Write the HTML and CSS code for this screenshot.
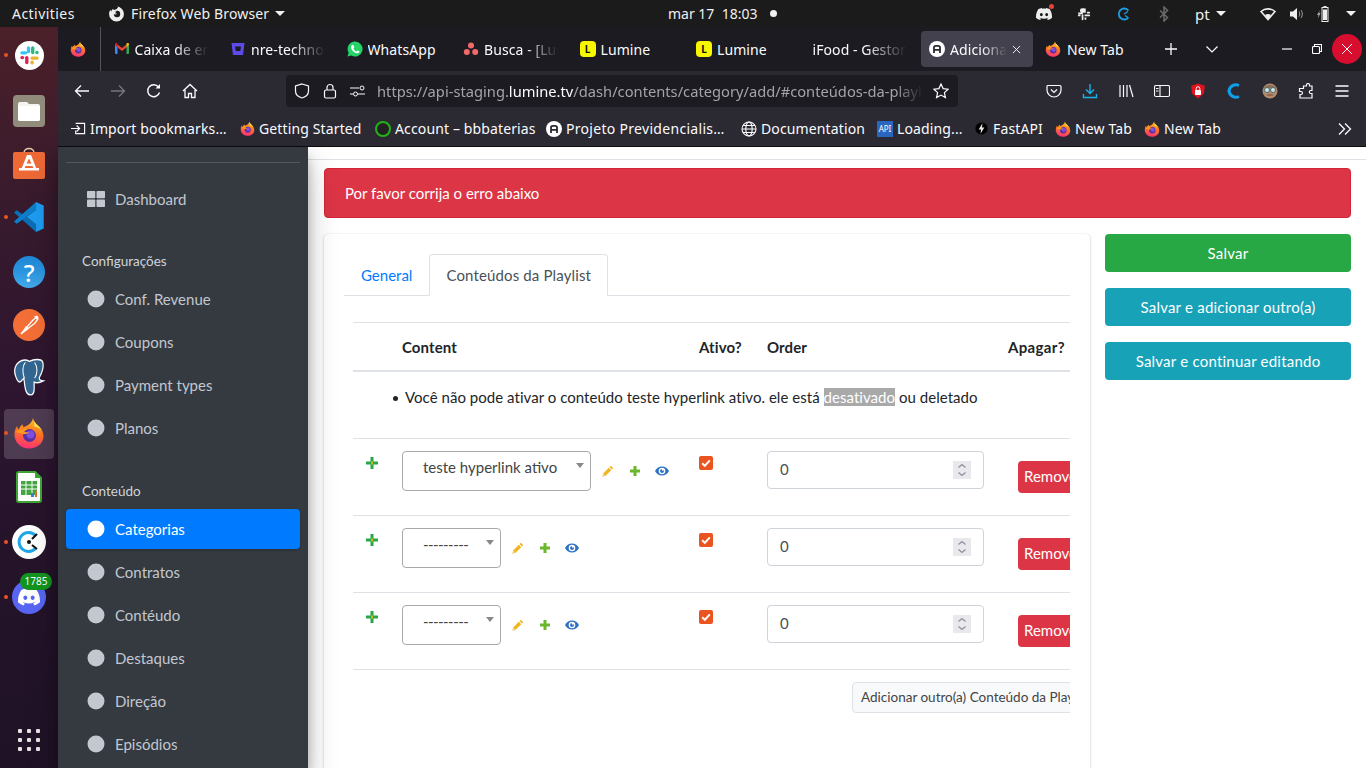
FILE: index.html
```html
<!DOCTYPE html>
<html lang="pt">
<head>
<meta charset="utf-8">
<title>Adicionar categoria</title>
<link rel="stylesheet" href="styles.css">
</head>
<body>
<svg class="defs" aria-hidden="true">
  <defs>
    <linearGradient id="ffg" x1="0.6" y1="0" x2="0.4" y2="1"><stop offset="0" stop-color="#ffc02e"/><stop offset=".45" stop-color="#ff7a1f"/><stop offset="1" stop-color="#ff2f78"/></linearGradient>
    <symbol id="firefox" viewBox="0 0 32 32">
      <path fill="url(#ffg)" d="M20 1c.6 3.6 2.8 5.4 5 7.4 3.600 3.200 5.500 7 5.500 10.600C30.500 26.500 24 31.500 16 31.500S1.500 25.500 1.500 17.500c0-3 .9-6 2.600-8.500.1 1.500.7 2.800 1.700 3.600.6-2.400 2-4.200 4.200-5.100-.3 1.200-.2 2 .4 2.600 3.600-1 8.600-3.600 9.600-9.100z"/>
      <path fill="#ffe34d" d="M20 1c.6 3.600 2.800 5.400 5 7.400 2.300 2.100 3.900 4.400 4.800 6.800-1.700-3.400-5-5.200-8.800-5.600C22 7 21 4 20 1z"/>
      <circle cx="16.500" cy="18.500" r="6.500" fill="#5a30a8"/>
      <circle cx="17.500" cy="17.500" r="4" fill="#7f4fe0"/>
      <path fill="#ff9a1f" d="M3 15c3-3 8-4.500 12-3-2 .5-3.500 1.500-4 2.800 1.200.6 3 .5 5 .2-1.500 2-5 2.600-7.500 1.500C6 15.800 4.500 15.800 3 15z"/>
    </symbol>
    <symbol id="roundlogo" viewBox="0 0 16 16">
      <circle cx="8" cy="8" r="8" fill="#fff"/>
      <path fill="none" stroke="#2b2a33" stroke-width="1.800" d="M5 12V6.500C5 5.400 5.800 4.800 7 4.800h2c1.200 0 2 .6 2 1.700V12M5 8.800h6"/>
    </symbol>
    <symbol id="discordmark" viewBox="0 0 24 24">
      <path d="M20.317 4.3698a19.7913 19.7913 0 00-4.8851-1.5152.0741.0741 0 00-.0785.0371c-.211.3753-.4447.8648-.6083 1.2495-1.8447-.2762-3.68-.2762-5.4868 0-.1636-.3933-.4058-.8742-.6177-1.2495a.077.077 0 00-.0785-.037 19.7363 19.7363 0 00-4.8852 1.515.0699.0699 0 00-.0321.0277C.5334 9.0458-.319 13.5799.0992 18.0578a.0824.0824 0 00.0312.0561c2.0528 1.5076 4.0413 2.4228 5.9929 3.0294a.0777.0777 0 00.0842-.0276c.4616-.6304.8731-1.2952 1.226-1.9942a.076.076 0 00-.0416-.1057c-.6528-.2476-1.2743-.5495-1.8722-.8923a.077.077 0 01-.0076-.1277c.1258-.0943.2517-.1923.3718-.2914a.0743.0743 0 01.0776-.0105c3.9278 1.7933 8.18 1.7933 12.0614 0a.0739.0739 0 01.0785.0095c.1202.099.246.1981.3728.2924a.077.077 0 01-.0066.1276 12.2986 12.2986 0 01-1.873.8914.0766.0766 0 00-.0407.1067c.3604.698.7719 1.3628 1.225 1.9932a.076.076 0 00.0842.0286c1.961-.6067 3.9495-1.5219 6.0023-3.0294a.077.077 0 00.0313-.0552c.5004-5.177-.8382-9.6739-3.5485-13.6604a.061.061 0 00-.0312-.0286zM8.02 15.3312c-1.1825 0-2.1569-1.0857-2.1569-2.419 0-1.3332.9555-2.4189 2.157-2.4189 1.2108 0 2.1757 1.0952 2.1568 2.419 0 1.3332-.9555 2.4189-2.1569 2.4189zm7.9748 0c-1.1825 0-2.1569-1.0857-2.1569-2.419 0-1.3332.9554-2.4189 2.1569-2.4189 1.2108 0 2.1757 1.0952 2.1568 2.419 0 1.3332-.946 2.4189-2.1568 2.4189Z"/>
    </symbol>
    <symbol id="slackmark" viewBox="0 0 24 24">
      <rect x="9" y="1.500" width="3.800" height="8" rx="1.900" fill="#36c5f0"/>
      <rect x="1.500" y="7" width="8" height="3.800" rx="1.900" fill="#36c5f0"/>
      <rect x="13.800" y="1.500" width="3.800" height="9" rx="1.900" fill="#2eb67d"/>
      <rect x="18.500" y="6.500" width="4" height="4" rx="1.900" fill="#2eb67d"/>
      <rect x="13" y="13" width="9.500" height="3.800" rx="1.900" fill="#ecb22e"/>
      <rect x="13" y="17.800" width="4" height="4.500" rx="1.900" fill="#ecb22e"/>
      <rect x="7" y="12.500" width="3.800" height="9.500" rx="1.900" fill="#e01e5a"/>
      <rect x="1.500" y="12.500" width="4.500" height="3.800" rx="1.900" fill="#e01e5a"/>
    </symbol>
    <symbol id="pencil" viewBox="0 0 12 12"><path fill="#f0b41c" d="M8.800.8l2.400 2.400-1.300 1.300-2.400-2.400zM6.800 2.800l2.400 2.400-5.600 5.600-3.200.9.800-3.300zM1.700 9l-.4 1.700 1.700-.4z"/></symbol>
    <symbol id="plusg" viewBox="0 0 12 12"><path fill="#6ab62d" d="M4.500 1h3v3.500H11v3H7.500V11h-3V7.500H1v-3h3.500z"/></symbol>
    <symbol id="eye" viewBox="0 0 14 10"><path fill="#2f72c4" d="M7 .5C3.800.5 1.200 2.400 0 5c1.200 2.600 3.800 4.500 7 4.500s5.800-1.900 7-4.500C12.800 2.400 10.200.5 7 .5zm0 7.800A3.300 3.300 0 1 1 7 1.700a3.300 3.300 0 0 1 0 6.600zM7 3a2 2 0 1 0 2 2c0-.4-.1-.7-.3-1A1 1 0 1 1 7 3z"/></symbol>
    <symbol id="grow" viewBox="0 0 14 14"><rect x="5.500" y="1" width="3" height="12" fill="#28a745"/><rect x="1" y="5.500" width="12" height="3" fill="#28a745"/><rect x="6" y="5.500" width="2" height="3" fill="#d7b32a"/></symbol>
    <symbol id="chk" viewBox="0 0 14 14"><rect width="14" height="14" rx="2" fill="#e95420"/><path d="M3.200 7.300l2.600 2.500 5-5.500" fill="none" stroke="#fff" stroke-width="2"/></symbol>
    <symbol id="spin" viewBox="0 0 18 18"><rect width="18" height="18" fill="#e9e9ed"/><path d="M5.500 6.500L9 3.500l3.500 3M5.500 11.500L9 14.500l3.500-3" fill="none" stroke="#8f8f9d" stroke-width="1.300"/></symbol>
    <symbol id="dot" viewBox="0 0 18 18"><circle cx="9" cy="9" r="8.500"/></symbol>
  </defs>
</svg>

<header class="topbar">
  <span class="activities">Activities</span>
  <span class="appmenu">
    <svg class="appicon" viewBox="0 0 16 16"><path fill="#eee" d="M8 1.500a7 7 0 1 1-7 7c0-1.500.5-3 1.300-4 .1.600.4 1.100.8 1.500.3-1.100 1-2 2-2.400-.1.500-.1.900.2 1.200C7 4.400 9.500 3.500 9.800 1.200 9.300 1.500 8.600 1.500 8 1.500z"/><circle cx="8.500" cy="8.500" r="3" fill="#1b1b1b"/><path fill="#eee" d="M3 6.800c1.500-1 3.400-1.300 5-.6l-1.400 1.600c.8.300 1.400.2 2-.1-.4 1-1.800 1.500-3 1.100C4.700 8.400 4 7.500 3 6.800z"/></svg>
    Firefox Web Browser<i class="caret"></i>
  </span>
  <span class="clock">mar 17&nbsp;&nbsp;18:03<i class="recdot"></i></span>
  <span class="tray">
    <span class="tslot"><svg class="t16" viewBox="0 0 24 24" fill="#eee"><use href="#discordmark"/></svg><i class="notif"></i></span>
    <span class="tslot"><svg class="t14 mono" viewBox="0 0 24 24"><path fill="#eee" d="M9 2h3v8H9a1.500 1.500 0 0 1 0-8zM2 9.500h8v3H3.500A1.500 1.500 0 0 1 2 11zM13.500 2a1.500 1.500 0 0 1 1.500 1.500V10h-3V3.500A1.500 1.500 0 0 1 13.500 2zM17 8h4a1.500 1.500 0 0 1 0 3h-4zM13 13h8a1.500 1.500 0 0 1 0 3h-8zM13 18h3v2.500a1.500 1.500 0 0 1-3 0zM9 13h2v8a1.500 1.500 0 0 1-3 0v-6.500A1.500 1.500 0 0 1 9 13zM3 13h3v3H3a1.500 1.500 0 0 1 0-3z"/></svg></span>
    <span class="tslot"><svg class="t14" viewBox="0 0 14 14" fill="none"><path d="M11.500 3.500A5.500 5.500 0 1 0 11.500 10.500" stroke="#1f9be0" stroke-width="1.800"/><path d="M7 7l4-2.500M8 8.500l3 2" stroke="#1f9be0" stroke-width="1.400"/></svg></span>
    <span class="tslot"><svg class="t16" viewBox="0 0 16 16" fill="none"><path d="M4 4.500l7.500 7-3.500 3.500V1l3.500 3.500-7.500 7" stroke="#6b6b6b" stroke-width="1.500"/></svg></span>
    <span class="tlang">pt<i class="caret"></i></span>
    <span class="tslot wifi"><svg class="t16" viewBox="0 0 16 14"><path fill="none" stroke="#eee" stroke-width="1.600" d="M1 4.500C5 1 11 1 15 4.500L8 12.500z"/><path fill="#eee" d="M5 8c2-1.300 4-1.300 6 0L8 12.500z"/></svg></span>
    <span class="tslot vol"><svg class="t16" viewBox="0 0 16 16"><path fill="#eee" d="M1 5.500h3L8 2v12l-4-3.500H1z"/><path fill="none" stroke="#999" stroke-width="1" d="M10 5.500c1 1.500 1 3.500 0 5M12 4c1.800 2.500 1.800 5.500 0 8"/></svg></span>
    <span class="tslot batt"><svg class="t16" viewBox="0 0 16 16"><path fill="#eee" d="M6.500 0h3v1h2v15h-7V1h2z"/><path fill="#1b1b1b" d="M5.500 2h5v13h-5z"/><path fill="#eee" d="M6 3.500h4V14H6z"/><path fill="#aaa" d="M3 4L0 9h1.500L1 12.500 3.500 7H2z"/></svg></span>
    <i class="caret lastcaret"></i>
  </span>
</header>

<div class="desktop">
  <nav class="dock">
    <div class="dockitem"><i class="running"></i>
      <span class="slack"><svg class="s21"><use href="#slackmark"/></svg></span>
    </div>
    <div class="dockitem">
      <svg class="d32" viewBox="0 0 32 32"><rect width="32" height="32" rx="4" fill="#908b7b"/><path fill="#f6f4f0" d="M5 9a2 2 0 0 1 2-2h7l2 2h9a2 2 0 0 1 2 2v13a2 2 0 0 1-2 2H7a2 2 0 0 1-2-2z"/><path fill="#fff" d="M5 11h22v13a2 2 0 0 1-2 2H7a2 2 0 0 1-2-2z"/></svg>
    </div>
    <div class="dockitem">
      <svg class="d32" viewBox="0 0 32 32"><path fill="none" stroke="#e9c9a6" stroke-width="1.500" d="M11 6c0-6 10-6 10 0"/><rect y="5" width="32" height="27" rx="2" fill="#ed6a36"/><path fill="#fff" d="M14 8h4l6 15h-3l-1.400-4h-7.200L11 23H8zm2 3.500L13.500 16.500h5z"/><rect x="6" y="21" width="20" height="2.500" fill="#fff"/></svg>
    </div>
    <div class="dockitem"><i class="running"></i>
      <svg class="d32" viewBox="0 0 100 100"><polygon fill="#0a6fb5" points="3,36 12,29 72,73 72,97"/><polygon fill="#0b7fcb" points="3,64 12,71 72,27 72,3"/><path fill="#1d9bf0" d="M72 3l24 11v72L72 97V73L42 50 72 27z" /></svg>
    </div>
    <div class="dockitem">
      <span class="helpicon">?</span>
    </div>
    <div class="dockitem">
      <svg class="d32" viewBox="0 0 32 32"><circle cx="16" cy="16" r="16" fill="#f46f37"/><path fill="none" stroke="#fff" stroke-width="1.300" d="M8 25L20 11l4-3 1 2-3 4z"/><path fill="#fff" d="M8 25l5-8 3 2.500zM21 7.500l3-1 1.500 2-2 2z"/></svg>
    </div>
    <div class="dockitem">
      <svg class="pg" viewBox="0 0 32 34" preserveAspectRatio="none"><path fill="#336791" stroke="#fff" stroke-width="1.200" d="M16 3c-3-1.500-7-1.500-10 .5C2 6 .6 11 2.500 16c1 3 2.500 5.500 4 5.500s2.500-2 4-3.500c.5 3 .8 7 1.500 9.500.7 3 2.500 5.500 5 5.500s3.500-2 3.500-5.500v-6c2 1 5 1 9-1-2-.2-4.500-.8-4-3 3-5 5-10 3-14.500C27 .5 20 1 16 3z"/><path fill="none" stroke="#fff" stroke-width="1" d="M12 4c-3 3-3 9-1 14M21 4c3 4 3 10 0 14"/></svg>
    </div>
    <div class="dockitem active"><i class="running"></i>
      <svg class="d32"><use href="#firefox"/></svg>
    </div>
    <div class="dockitem">
      <svg class="d32 calc" viewBox="0 0 26 32"><path fill="#fff" stroke="#3fa535" stroke-width="2" d="M3 1h16l6 6v22a2 2 0 0 1-2 2H3a2 2 0 0 1-2-2V3a2 2 0 0 1 2-2z"/><path fill="#3fa535" d="M19 0l7 7h-7z"/><path fill="#43a640" d="M5 10h16v14H5z"/><path stroke="#fff" stroke-width="1" d="M5 14h16M5 18h16M10 10v14M16 10v14"/><path fill="#e06d2f" d="M19 20h2v6h-2z"/><path fill="#3a81c9" d="M15 22h3v4h-3z"/></svg>
    </div>
    <div class="dockitem"><i class="running"></i>
      <svg class="d34" viewBox="0 0 34 34"><circle cx="17" cy="17" r="17" fill="#fff"/><path fill="none" stroke="#1ea7e8" stroke-width="3" d="M23.500 10.500a9.500 9.500 0 1 0 0 13"/><circle cx="17" cy="17" r="2" fill="#111"/><path stroke="#111" stroke-width="2" d="M20 14l5-5M20 20l5 4"/></svg>
    </div>
    <div class="dockitem"><i class="running"></i>
      <span class="discord"><svg class="s22" fill="#fff"><use href="#discordmark"/></svg><b class="badge">1785</b></span>
    </div>
    <div class="dockitem apps">
      <svg class="d22" viewBox="0 0 22 22" fill="#e6e3e6"><rect x="0" y="0" width="4" height="4" rx="1"/><rect x="9" y="0" width="4" height="4" rx="1"/><rect x="18" y="0" width="4" height="4" rx="1"/><rect x="0" y="9" width="4" height="4" rx="1"/><rect x="9" y="9" width="4" height="4" rx="1"/><rect x="18" y="9" width="4" height="4" rx="1"/><rect x="0" y="18" width="4" height="4" rx="1"/><rect x="9" y="18" width="4" height="4" rx="1"/><rect x="18" y="18" width="4" height="4" rx="1"/></svg>
    </div>
  </nav>

  <div class="browser">
    <div class="tabbar">
      <span class="ffbtn"><svg class="i16"><use href="#firefox"/></svg></span>
      <span class="tab"><svg class="i16" viewBox="0 0 16 16"><path fill="#4285f4" d="M1 3.500h2.500V13H2a1 1 0 0 1-1-1z"/><path fill="#34a853" d="M12.500 3.500H15V12a1 1 0 0 1-1 1h-1.500z"/><path fill="#ea4335" d="M3.500 3.500L8 7l4.500-3.500V6.500L8 10 3.500 6.500z"/><path fill="#c5221f" d="M1 3.500C1 2 2.500 1.800 3.500 2.500L3.500 6.500z"/><path fill="#fbbc04" d="M15 3.500C15 2 13.500 1.800 12.500 2.500V6.500z"/></svg><span class="tlabel fade">Caixa de entrada</span></span>
      <span class="tab"><svg class="i16" viewBox="0 0 16 16"><path fill="#5b4be8" d="M1.500 2h13L13 14H3z"/><path fill="#1c1b22" d="M5 5.500h6l-.7 4.500H5.700z"/></svg><span class="tlabel fade">nre-technology</span></span>
      <span class="tab"><svg class="i16" viewBox="0 0 16 16"><path fill="#25d366" d="M8 .5a7.500 7.500 0 0 0-6.400 11.300L.5 15.500l3.800-1A7.500 7.500 0 1 0 8 .5z"/><path fill="#fff" d="M5.500 3.800c-.4 0-1.500 1-1.500 2.500 0 2.500 3.500 6 6.300 6 1.500 0 2.300-1 2.300-1.700 0-.4-1.900-1.300-2.200-1.200-.4.100-.7 1-1 1-.8 0-2.700-1.800-2.900-2.700 0-.3.800-.7.800-1.100 0-.3-.6-2.800-1.800-2.800z"/></svg><span class="tlabel">WhatsApp</span></span>
      <span class="tab"><svg class="i16" viewBox="0 0 16 16" fill="#f06a6a"><circle cx="8" cy="4.500" r="3"/><circle cx="3.800" cy="11" r="3"/><circle cx="12.200" cy="11" r="3"/></svg><span class="tlabel fade">Busca - [Lumine]</span></span>
      <span class="tab"><span class="lumine">L</span><span class="tlabel">Lumine</span></span>
      <span class="tab"><span class="lumine">L</span><span class="tlabel">Lumine</span></span>
      <span class="tab"><span class="tlabel fade">iFood - Gestor</span></span>
      <span class="tab current"><svg class="i16"><use href="#roundlogo"/></svg><span class="tlabel fade">Adicionar</span><svg class="tabx" viewBox="0 0 10 10"><path d="M1 1l8 8M9 1l-8 8" stroke="#fbfbfe" stroke-width="1"/></svg></span>
      <span class="tab newtab"><svg class="i16"><use href="#firefox"/></svg><span class="tlabel">New Tab</span></span>
      <svg class="tplus" viewBox="0 0 12 12"><path d="M6 0v12M0 6h12" stroke="#fbfbfe" stroke-width="1.300"/></svg>
      <svg class="tchev" viewBox="0 0 12 7"><path d="M.5.500L6 6l5.500-5.500" fill="none" stroke="#fbfbfe" stroke-width="1.200"/></svg>
      <span class="wctl"><svg class="wico" viewBox="0 0 10 10"><path d="M0 5h10" stroke="#fff" stroke-width="1.200"/></svg></span>
      <span class="wctl"><svg class="wico" viewBox="0 0 10 10" fill="none" stroke="#fff" stroke-width="1.100"><rect x=".5" y="2.500" width="7" height="7" rx="1"/><path d="M2.500 2.500V.5h7v7h-2"/></svg></span>
      <span class="wclose"><svg class="wico" viewBox="0 0 10 10"><path d="M0 0l10 10M10 0L0 10" stroke="#fff" stroke-width="1"/></svg></span>
    </div>

    <div class="navbar">
      <span class="nslot"><svg class="i16" viewBox="0 0 16 16"><path d="M15 8H1.500M7 2.500L1.500 8 7 13.500" fill="none" stroke="#fbfbfe" stroke-width="1.300"/></svg></span>
      <span class="nslot"><svg class="i16" viewBox="0 0 16 16"><path d="M1 8h13.500M9 2.500L14.500 8 9 13.500" fill="none" stroke="#77767d" stroke-width="1.300"/></svg></span>
      <span class="nslot"><svg class="i16" viewBox="0 0 16 16" fill="none"><path d="M13.500 9.500A6 6 0 1 1 12.500 4" stroke="#fbfbfe" stroke-width="1.400"/><path d="M14 1v4.500H9.500z" fill="#fbfbfe"/></svg></span>
      <span class="nslot"><svg class="i16" viewBox="0 0 16 16" fill="none"><path d="M1 8l7-6.500L15 8M3 7v7.500h3.500V10.500h3v4H13V7" stroke="#fbfbfe" stroke-width="1.300"/></svg></span>
      <div class="urlbar">
        <svg class="uico shield" viewBox="0 0 16 16"><path d="M8 1l6.500 2v5c0 3.500-3 6-6.500 7-3.500-1-6.500-3.500-6.500-7V3z" fill="none" stroke="#fbfbfe" stroke-width="1.200"/></svg>
        <svg class="uico lock" viewBox="0 0 16 16"><rect x="2.500" y="7" width="11" height="8" rx="1.500" fill="none" stroke="#fbfbfe" stroke-width="1.200"/><path d="M5 7V4.500a3 3 0 0 1 6 0V7" fill="none" stroke="#fbfbfe" stroke-width="1.200"/></svg>
        <svg class="uico perm" viewBox="0 0 16 12"><path d="M0 3h9M0 9h3M8 9h7" stroke="#fbfbfe" stroke-width="1.100"/><circle cx="12" cy="3" r="2" fill="none" stroke="#fbfbfe"/><circle cx="5.500" cy="9" r="2" fill="none" stroke="#fbfbfe"/></svg>
        <span class="url">https://api-staging.<b>lumine.tv</b>/dash/contents/category/add/#conteúdos-da-playlist</span>
        <svg class="uico star" viewBox="0 0 16 16"><path d="M8 1l2.100 4.600 5 .6-3.700 3.400 1 5L8 12.100l-4.400 2.500 1-5L.9 6.200l5-.6z" fill="none" stroke="#fbfbfe" stroke-width="1.200"/></svg>
      </div>
      <div class="navright">
        <span class="nslot"><svg class="i16" viewBox="0 0 16 16" fill="none" stroke="#fbfbfe" stroke-width="1.200"><path d="M2 2.500h12a1 1 0 0 1 1 1V7a7 7 0 0 1-14 0V3.500a1 1 0 0 1 1-1z"/><path d="M5 6.500L8 9.500l3-3"/></svg></span>
        <span class="nslot"><svg class="i16" viewBox="0 0 16 16" fill="none" stroke="#17b3e8" stroke-width="1.400"><path d="M8 1v9M4 6.500L8 10.500l4-4M1.500 11v3.500h13V11"/></svg></span>
        <span class="nslot"><svg class="i16" viewBox="0 0 16 16" stroke="#fbfbfe" stroke-width="1.200" fill="none"><path d="M2 2v12M5.500 2v12M9 2v12M11.500 2l3.500 12"/></svg></span>
        <span class="nslot"><svg class="i16" viewBox="0 0 16 16" stroke="#fbfbfe" stroke-width="1.100" fill="none"><rect x=".5" y="2.500" width="15" height="11" rx="1.500"/><path d="M6 2.500v11M2 5.500h2.500M2 8h2.500"/></svg></span>
        <span class="nslot"><svg class="i16" viewBox="0 0 16 16"><path fill="#e2121d" d="M8 .5l6.800 2.300-.8 7.700L8 15.500 2 10.500l-.8-7.700z"/><rect x="5" y="7" width="6" height="5" rx=".8" fill="#fff"/><path d="M6.200 7V5.500a1.800 1.800 0 0 1 3.600 0V7" fill="none" stroke="#fff"/></svg></span>
        <span class="nslot"><svg class="i16" viewBox="0 0 16 16" fill="none"><path d="M13 2.500A7 7 0 0 0 3 8a7 7 0 0 0 10 5.500" stroke="#0fa0ea" stroke-width="3"/></svg></span>
        <span class="nslot"><svg class="i16" viewBox="0 0 16 16"><circle cx="8" cy="8" r="7.500" fill="#b28a6c"/><path d="M2 5c2-4 10-4 12 0z" fill="#8b6b54"/><circle cx="5" cy="7" r="2.500" fill="#cfe6e8" stroke="#4b6a70"/><circle cx="11" cy="7" r="2.500" fill="#cfe6e8" stroke="#4b6a70"/><path d="M5 12h6" stroke="#6d4a36"/></svg></span>
        <span class="nslot"><svg class="i16" viewBox="0 0 16 16"><path d="M5.500 3h3V2a1.500 1.500 0 0 1 3 0v1H14v4.500h-1.200a1.500 1.500 0 0 0 0 3H14V15H2v-3.500h1a1.500 1.500 0 0 0 0-3H1.500V5.500h4z" fill="none" stroke="#fbfbfe" stroke-width="1.200"/></svg></span>
        <span class="nslot"><svg class="i16" viewBox="0 0 16 16"><path d="M1.500 3h13M1.500 8h13M1.500 13h13" stroke="#fbfbfe" stroke-width="1.400"/></svg></span>
      </div>
    </div>

    <div class="bookmarks">
      <span class="bm"><svg class="b15" viewBox="0 0 16 16" fill="none" stroke="#fbfbfe" stroke-width="1.200"><path d="M5 2.500h9.500v11H5V10M0 8h9M6 4.800L9.200 8 6 11.200"/></svg><span class="blabel">Import bookmarks…</span></span>
      <span class="bm"><svg class="b15"><use href="#firefox"/></svg><span class="blabel">Getting Started</span></span>
      <span class="bm"><span class="ring"></span><span class="blabel">Account – bbbaterias</span></span>
      <span class="bm"><svg class="b16"><use href="#roundlogo"/></svg><span class="blabel wider">Projeto Previdencialis…</span></span>
      <span class="bm"><svg class="b16" viewBox="0 0 16 16" fill="none" stroke="#fbfbfe" stroke-width="1.100"><circle cx="8" cy="8" r="7"/><ellipse cx="8" cy="8" rx="3.200" ry="7"/><path d="M1 8h14M2 4.500h12M2 11.500h12"/></svg><span class="blabel">Documentation</span></span>
      <span class="bm"><span class="apibadge">API</span><span class="blabel">Loading...</span></span>
      <span class="bm"><svg class="b15" viewBox="0 0 16 16"><circle cx="8" cy="8" r="6.500" fill="#000"/><path d="M9 2.500L5 9h2.500L7 13.500 11 7H8.500z" fill="#e6e6e6"/></svg><span class="blabel">FastAPI</span></span>
      <span class="bm"><svg class="b16"><use href="#firefox"/></svg><span class="blabel">New Tab</span></span>
      <span class="bm"><svg class="b16"><use href="#firefox"/></svg><span class="blabel">New Tab</span></span>
      <svg class="bmore" viewBox="0 0 14 12" fill="none" stroke="#fbfbfe" stroke-width="1.300"><path d="M1 .5L6.500 6 1 11.500M7 .5L12.500 6 7 11.500"/></svg>
    </div>

    <div class="page">
      <aside class="sidebar">
        <div class="sidetop"></div>
        <a class="sitem"><svg class="sico" viewBox="0 0 18 16" fill="#c2c7d0"><rect width="8.300" height="7.300" rx=".8"/><rect x="9.500" width="8.500" height="7.300" rx=".8"/><rect y="8.500" width="8.300" height="7.500" rx=".8"/><rect x="9.500" y="8.500" width="8.500" height="7.500" rx=".8"/></svg><span>Dashboard</span></a>
        <h6 class="shead first">Configurações</h6>
        <a class="sitem"><svg class="sico"><use href="#dot"/></svg><span>Conf. Revenue</span></a>
        <a class="sitem"><svg class="sico"><use href="#dot"/></svg><span>Coupons</span></a>
        <a class="sitem"><svg class="sico"><use href="#dot"/></svg><span>Payment types</span></a>
        <a class="sitem"><svg class="sico"><use href="#dot"/></svg><span>Planos</span></a>
        <h6 class="shead second">Conteúdo</h6>
        <a class="sitem on"><svg class="sico"><use href="#dot"/></svg><span>Categorias</span></a>
        <a class="sitem"><svg class="sico"><use href="#dot"/></svg><span>Contratos</span></a>
        <a class="sitem"><svg class="sico"><use href="#dot"/></svg><span>Contéudo</span></a>
        <a class="sitem"><svg class="sico"><use href="#dot"/></svg><span>Destaques</span></a>
        <a class="sitem"><svg class="sico"><use href="#dot"/></svg><span>Direção</span></a>
        <a class="sitem"><svg class="sico"><use href="#dot"/></svg><span>Episódios</span></a>
      </aside>
      <main class="main">
        <div class="headstrip"></div>
        <div class="mainbody">
          <div class="alert">Por favor corrija o erro abaixo</div>
          <div class="columns">
            <section class="card">
              <ul class="tabs">
                <li class="tablink">General</li>
                <li class="tablink act">Conteúdos da Playlist</li>
              </ul>
              <div class="tablewrap">
                <div class="thead">
                  <span></span><span>Content</span><span>Ativo?</span><span>Order</span><span class="apagar">Apagar?</span>
                </div>
                <div class="errrow">
                  <ul class="errlist"><li>Você não pode ativar o conteúdo teste hyperlink ativo. ele está <mark class="sel">desativado</mark> ou deletado</li></ul>
                </div>
                <div class="row">
                  <svg class="grow"><use href="#grow"/></svg>
                  <div class="selcell">
                    <span class="select wide">teste hyperlink ativo<i class="selcaret"></i></span>
                    <svg class="act1"><use href="#pencil"/></svg><svg class="act1"><use href="#plusg"/></svg><svg class="act2"><use href="#eye"/></svg>
                  </div>
                  <svg class="check"><use href="#chk"/></svg>
                  <div class="ordercell"><input class="order" type="text" value="0" aria-label="Order"><svg class="spin"><use href="#spin"/></svg></div>
                  <button class="remove" type="button">Remover</button>
                </div>
                <div class="row">
                  <svg class="grow"><use href="#grow"/></svg>
                  <div class="selcell">
                    <span class="select narrow dash">---------<i class="selcaret"></i></span>
                    <svg class="act1"><use href="#pencil"/></svg><svg class="act1"><use href="#plusg"/></svg><svg class="act2"><use href="#eye"/></svg>
                  </div>
                  <svg class="check"><use href="#chk"/></svg>
                  <div class="ordercell"><input class="order" type="text" value="0" aria-label="Order"><svg class="spin"><use href="#spin"/></svg></div>
                  <button class="remove" type="button">Remover</button>
                </div>
                <div class="row">
                  <svg class="grow"><use href="#grow"/></svg>
                  <div class="selcell">
                    <span class="select narrow dash">---------<i class="selcaret"></i></span>
                    <svg class="act1"><use href="#pencil"/></svg><svg class="act1"><use href="#plusg"/></svg><svg class="act2"><use href="#eye"/></svg>
                  </div>
                  <svg class="check"><use href="#chk"/></svg>
                  <div class="ordercell"><input class="order" type="text" value="0" aria-label="Order"><svg class="spin"><use href="#spin"/></svg></div>
                  <button class="remove" type="button">Remover</button>
                </div>
                <div class="addrow"><button class="addbtn" type="button">Adicionar outro(a) Conteúdo da Playlist</button></div>
              </div>
            </section>
            <aside class="actions">
              <button class="btn green" type="button">Salvar</button>
              <button class="btn teal" type="button">Salvar e adicionar outro(a)</button>
              <button class="btn teal" type="button">Salvar e continuar editando</button>
            </aside>
          </div>
        </div>
      </main>
    </div>
  </div>
</div>
</body>
</html>
```

FILE: styles.css
```css
* { box-sizing: border-box; }
html, body { margin: 0; height: 100%; }
body {
  width: 1366px; height: 768px; overflow: hidden;
  display: flex; flex-direction: column;
  font-family: "Noto Sans", sans-serif; font-size: 14px; color: #fbfbfe;
  background: #1c1b22;
}
svg { display: block; flex: none; }
.defs { width: 0; height: 0; }

/* top bar */
.topbar {
  height: 27px; flex: none; background: #1b1b1b; color: #f0f0f0;
  display: flex; align-items: center; font-size: 14px; position: relative;
}
.activities { margin-left: 12px; width: 97px; letter-spacing: .45px; }
.appmenu { display: flex; align-items: center; letter-spacing: .15px; }
.appicon { width: 17px; height: 17px; margin-right: 6px; margin-left: -1px; }
.caret { display: block; width: 0; height: 0; border: 5px solid transparent; border-top: 5.500px solid #f0f0f0; border-bottom: 0; margin-left: 6px; }
.clock { position: absolute; left: 668px; display: flex; align-items: center; }
.recdot { width: 7px; height: 7px; border-radius: 50%; background: #f0f0f0; margin-left: 13px; }
.tray { margin-left: auto; display: flex; align-items: center; }
.tslot { width: 40px; display: flex; justify-content: center; position: relative; }
.t16 { width: 16px; height: 16px; }
.t14 { width: 14px; height: 14px; }
.notif { position: absolute; top: -2px; right: 10px; width: 5px; height: 5px; border-radius: 50%; background: #e8413b; }
.tlang { display: flex; align-items: center; width: 45px; margin-left: 11px; font-size: 15px; }
.wifi { width: 29px; margin-left: 13px; }
.vol { width: 29px; }
.batt { width: 28px; }
.lastcaret { margin-left: 7px; margin-right: 10px; }

.desktop { flex: 1; display: flex; min-height: 0; }

/* dock */
.dock {
  width: 58px; flex: none; display: grid;
  grid-template-rows: 56px 56px 48px 60px 50px 56px 48px 64px 44px 66px 44px 1fr;
  background: linear-gradient(180deg, #4b2029 0%, #371a2d 25%, #2d1530 50%, #241329 75%, #1f1226 100%);
}
.dockitem { display: flex; align-items: center; justify-content: center; position: relative; min-height: 0; }
.dockitem.active::before { content: ""; position: absolute; left: 4px; top: 8px; width: 50px; height: 50px; border-radius: 4px; background: rgba(255,255,255,.17); }
.dockitem.active > svg { position: relative; }
.apps { align-self: end; height: 56px; }
.running { position: absolute; left: 4px; top: 50%; width: 4px; height: 4px; margin-top: -2px; border-radius: 50%; background: #e95420; }
.d32 { width: 32px; height: 32px; }
.d34 { width: 34px; height: 34px; }
.d22 { width: 22px; height: 22px; }
.pg { width: 33px; height: 38px; }
.calc { width: 26px; }
.slack { width: 29px; height: 29px; border-radius: 50%; background: #fff; display: flex; align-items: center; justify-content: center; }
.s21 { width: 21px; height: 21px; }
.s22 { width: 22px; height: 22px; }
.helpicon {
  width: 32px; height: 32px; border-radius: 50%; color: #fff; font-size: 24px; font-weight: 500;
  background: linear-gradient(180deg, #1f86d6 0%, #2a96df 50%, #46a9e8 100%);
  display: flex; align-items: center; justify-content: center;
}
.discord { width: 34px; height: 34px; border-radius: 50%; background: #5865f2; display: flex; align-items: center; justify-content: center; position: relative; }
.badge {
  position: absolute; left: 8px; top: -7px; width: 32px; height: 17px; border-radius: 8.500px;
  background: #12951f; color: #fff; font-size: 10px; font-weight: 400; text-align: center; line-height: 17px;
}

/* browser */
.browser { flex: 1; min-width: 0; display: flex; flex-direction: column; }
.tabbar { height: 44px; flex: none; background: #1c1b22; display: flex; align-items: center; font-size: 14px; }
.i16 { width: 16px; height: 16px; }
.ffbtn { width: 43px; height: 44px; display: flex; align-items: center; padding-left: 12px; border-right: 1px solid #55545b; margin-right: 4.500px; flex: none; }
.tab { width: 116.500px; height: 36px; flex: none; display: flex; align-items: center; padding: 0 14px 0 8px; gap: 5px; letter-spacing: .08px; }
.tlabel { white-space: nowrap; overflow: hidden; flex: 1; }
.fade { -webkit-mask-image: linear-gradient(to right, #000 55%, transparent 100%); mask-image: linear-gradient(to right, #000 55%, transparent 100%); }
.lumine { width: 16px; height: 16px; border-radius: 4px; background: #f7f700; color: #111; font-size: 10px; font-weight: 700; display: flex; align-items: center; justify-content: center; flex: none; }
.tab.current { width: 112px; background: #42414d; border-radius: 4px; padding-right: 12px; gap: 5px; }
.tabx { width: 9px; height: 9px; flex: none; }
.newtab { width: 120px; margin-left: 4px; gap: 6px; }
.tplus { width: 12px; height: 12px; margin-left: 8px; }
.tchev { width: 12px; height: 7px; margin-left: 29px; }
.wctl { width: 30px; display: flex; justify-content: center; flex: none; }
.tchev + .wctl { margin-left: 54px; }
.wclose { width: 30px; height: 30px; border-radius: 50%; background: #d70e2e; display: flex; align-items: center; justify-content: center; flex: none; }
.wico { width: 10px; height: 10px; }

.navbar { height: 40px; flex: none; background: #2b2a33; display: flex; align-items: center; padding-left: 6px; }
.nslot { width: 36px; display: flex; justify-content: center; flex: none; }
.urlbar {
  width: 672px; height: 32px; margin-left: 78px; background: #1c1b22; border-radius: 4px;
  display: flex; align-items: center; padding-left: 8px; flex: none;
}
.uico { width: 16px; height: 16px; flex: none; }
.lock { margin-left: 12px; }
.perm { margin-left: 12px; height: 12px; }
.url { margin-left: 11px; width: 546px; white-space: nowrap; overflow: hidden; color: #a3a3a8; flex: none; font-size: 14.700px;
  -webkit-mask-image: linear-gradient(to right, #000 95%, transparent); mask-image: linear-gradient(to right, #000 95%, transparent); }
.url b { font-weight: 400; color: #fbfbfe; }
.star { margin-left: 10px; }
.navright { display: flex; margin-left: 78px; flex: none; }

.bookmarks {
  height: 36px; flex: none; background: #2b2a33; border-bottom: 1px solid #0c0c0d;
  display: grid; grid-template-columns: 169px 135px 171px 195px 136px 97px 81px 89px 89px auto;
  align-items: center; padding-left: 13px; font-size: 14px;
}
.bm { display: flex; align-items: center; gap: 4px; white-space: nowrap; overflow: hidden; }
.blabel { letter-spacing: .13px; }
.blabel.wider { letter-spacing: .3px; }
.b15 { width: 15px; height: 15px; }
.b16 { width: 16px; height: 16px; }
.ring { width: 16px; height: 16px; border: 2.500px solid #1fb316; border-radius: 50%; background: #222; flex: none; }
.apibadge { width: 16px; height: 16px; background: #2a66c0; color: #fff; font-size: 8px; line-height: 16px; text-align: center; flex: none; }
.bmore { width: 14px; height: 12px; margin-left: 105px; }

/* page */
.page { flex: 1; min-height: 0; display: flex; background: #fff; font-family: "Lato", sans-serif; font-size: 15px; }
.sidebar {
  width: 250px; flex: none; background: #343a40; padding: 15px 8px 0; overflow: hidden; position: relative; z-index: 1;
  box-shadow: 0 14px 28px rgba(0,0,0,.25), 0 10px 10px rgba(0,0,0,.22);
}
.sidetop { height: 1px; background: #4f5962; margin-bottom: 16px; }
.sitem { height: 40px; margin-bottom: 3px; display: flex; align-items: center; padding-left: 21px; color: #c2c7d0; border-radius: 4px; }
.sico { width: 18px; height: 18px; margin-right: 10px; fill: #c2c7d0; }
.sitem.on { background: #007bff; color: #fff; box-shadow: 0 1px 3px rgba(0,0,0,.2); }
.sitem.on .sico { fill: #fff; }
.shead { margin: 0; height: 36px; line-height: 36px; padding-left: 16px; font-size: 13.500px; font-weight: 400; color: #d0d4db; }
.shead.first { margin-top: 24px; }
.shead.second { margin-top: 25px; }

.main { flex: 1; min-width: 0; overflow: hidden; color: #212529; }
.headstrip { height: 13px; background: #fff; border-bottom: 1px solid #dee2e6; }
.mainbody { padding: 8px 15px 0 16px; }
.alert { height: 50px; background: #dc3545; border: 1px solid #d32535; border-radius: 4px; color: #fff; padding-left: 20px; display: flex; align-items: center; }
.columns { display: flex; gap: 15px; margin-top: 16px; align-items: flex-start; }
.card { width: 766px; height: 640px; flex: none; background: #fff; border-radius: 4px; box-shadow: 0 0 1px rgba(0,0,0,.125), 0 1px 3px rgba(0,0,0,.2); padding: 20px 20px 0; }
.tabs { list-style: none; margin: 0; padding: 0; display: flex; height: 42px; border-bottom: 1px solid #dee2e6; }
.tablink { height: 42px; padding: 0 16px; line-height: 40px; color: #007bff; border: 1px solid transparent; border-radius: 4px 4px 0 0; }
.tablink.act { color: #495057; background: #fff; border-color: #dee2e6 #dee2e6 #fff; letter-spacing: .14px; }
.tablewrap { margin: 26px 0 0 9px; width: 717px; overflow: hidden; }
.thead { display: grid; grid-template-columns: 49px 297px 68px 1fr auto; height: 50px; align-items: center; border-top: 1px solid #dee2e6; border-bottom: 2px solid #dee2e6; font-weight: 700; letter-spacing: .1px; }
.apagar { padding-right: 5px; letter-spacing: .35px; }
.errrow { height: 67px; border-bottom: 1px solid #dee2e6; padding-top: 16px; }
.errlist { margin: 0; padding-left: 52px; list-style: none; line-height: 18px; color: #212529; letter-spacing: .04px; }
.errlist li::before { content: ""; display: inline-block; width: 5px; height: 5px; border-radius: 50%; background: #212529; margin: 0 7px 2px -12px; vertical-align: middle; }
.sel { background: #a9a9a9; color: #fff; }
.row { display: grid; grid-template-columns: 49px 297px 68px 251px auto; height: 77px; border-bottom: 1px solid #dee2e6; align-items: start; padding-top: 12px; }
.grow { width: 14px; height: 14px; margin: 5px 0 0 12px; }
.selcell { display: flex; align-items: flex-start; }
.select { height: 40px; border: 1px solid #aaa; border-radius: 4px; padding: 5px 0 0 20px; color: #444; position: relative; white-space: nowrap; display: block; line-height: 20px; flex: none; }
.select.wide { width: 189px; }
.select.narrow { width: 99px; }
.dash { letter-spacing: -.55px; }
.selcaret { position: absolute; right: 6px; top: 11px; width: 0; height: 0; border: 4px solid transparent; border-top: 5px solid #888; border-bottom: 0; }
.act1 { width: 12px; height: 12px; margin: 14px 0 0 0; }
.act2 { width: 14px; height: 10px; margin: 15px 0 0 0; }
.selcell .act1:nth-of-type(1) { margin-left: 11px; }
.selcell .act1:nth-of-type(2) { margin-left: 15px; }
.selcell .act2 { margin-left: 14px; }
.check { width: 14px; height: 14px; margin-top: 5px; }
.ordercell { width: 217px; height: 38px; position: relative; }
.order { width: 100%; height: 100%; border: 1px solid #ced4da; border-radius: 4px; padding: 0 12px 2px; font: inherit; color: #495057; background: #fff; }
.spin { position: absolute; right: 13px; top: 10px; width: 18px; height: 18px; }
.remove { width: 90px; height: 32px; margin-top: 10px; background: #dc3545; border: 0; border-radius: 4px 0 0 4px; color: #fff; font: inherit; padding: 0 0 2px 6px; text-align: left; white-space: nowrap; }
.addrow { padding: 12px 0 0 499px; }
.addbtn { width: 260px; height: 31px; background: #f8f9fa; border: 1px solid #dee2e6; border-radius: 4px; color: #444; font: inherit; font-size: 13.500px; text-align: left; padding: 0 0 2px 8px; white-space: nowrap; overflow: hidden; }
.actions { width: 246px; flex: none; display: flex; flex-direction: column; gap: 16px; }
.btn { height: 38px; border: 1px solid transparent; border-radius: 4px; color: #fff; font: inherit; letter-spacing: .22px; }
.green { background: #28a745; }
.teal { background: #17a2b8; }
```
